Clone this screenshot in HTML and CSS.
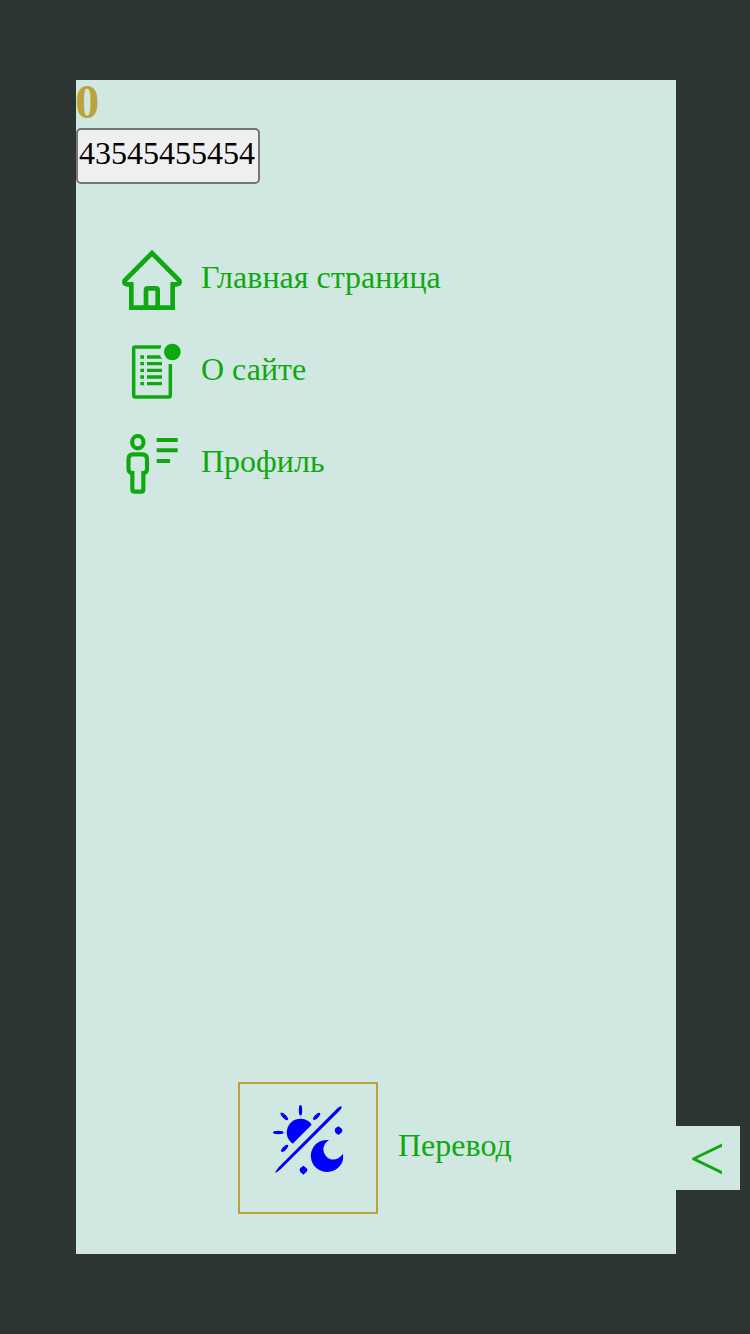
FILE: index.html
```html
<!DOCTYPE html>
<html lang="ru">
<head>
<meta charset="utf-8">
<title>Меню</title>
<link rel="stylesheet" href="styles.css">
</head>
<body>
<div class="page">
  <aside class="panel">
    <div class="score">0</div>
    <button class="code">43545455454</button>
    <nav class="menu">
      <a class="item">
        <svg class="icon" viewBox="30 30 180 180" fill="none" stroke="currentColor" stroke-width="14">
          <path d="M58 203V133H45Q33 130 39 121L120 39L201 121Q207 130 195 133H182V203Z"/>
          <path d="M102 203V150Q102 145 107 145H132Q137 145 137 150V203"/>
        </svg>
        <span>Главная страница</span>
      </a>
      <a class="item">
        <svg class="icon" viewBox="18 30 180 180" fill="none" stroke="currentColor" stroke-width="10.500">
          <path d="M133 45H57Q53 45 53 49V190Q53 195 57 195H159Q163 195 163 190V96"/>
          <path d="M73 75h11M73 95h11M73 115h11M73 135h11M73 155h11M93 75h39M93 95h45M93 115h45M93 135h45M93 155h45" stroke-width="10"/>
          <path d="M132 39l4 2-4 10zM132 70l2 5 5 5h-7z" fill="currentColor" stroke="none"/>
          <circle cx="169" cy="60" r="25" fill="currentColor" stroke="none"/>
        </svg>
        <span>О сайте</span>
      </a>
      <a class="item">
        <svg class="icon" viewBox="30 30 180 180" fill="none" stroke="currentColor" stroke-width="12.500">
          <ellipse cx="77.500" cy="54.500" rx="17" ry="18.500"/>
          <path d="M61 141V147H57Q49.500 143 49.500 135V106Q49.500 91 63 91H91Q105 91 105 106V135Q105 143 98 147H94V197Q94 203 88 203H68Q61 203 61 197V141"/>
          <path d="M134 48h63M134 79h63M134 111h40" stroke-width="12"/>
        </svg>
        <span>Профиль</span>
      </a>
    </nav>
    <div class="footer">
      <button class="theme" aria-label="Тема">
        <svg class="theme-icon" viewBox="0 0 270 270" fill="currentColor">
          <path d="M86 143L143 86A41 41 0 1 0 86 143Z"/>
          <path d="M33 231Q35 225 44 214L221 36Q230 29 232 31Q235 34 228 43L50 220Q39 229 33 231Z"/>
          <ellipse cx="109.500" cy="43" rx="5" ry="16"/>
          <ellipse cx="43" cy="109.500" rx="16" ry="5"/>
          <ellipse cx="61" cy="61" rx="15" ry="5.500" transform="rotate(45 61 61)"/>
          <ellipse cx="158" cy="61" rx="14" ry="5.500" transform="rotate(-45 158 61)"/>
          <ellipse cx="62" cy="157" rx="14" ry="5.500" transform="rotate(-45 62 157)"/>
          <path d="M195 132Q164 129 148 153Q132 181 149 208Q171 235 206 225Q242 209 237 173Q222 194 200 190Q178 181 178 158Q180 142 195 132Z"/>
          <path d="M223 91L232 97Q238 104 232 110L223 117L214 110Q209 104 214 97ZM118 209L127 216Q133 222 127 228L118 236L109 228Q104 222 109 216Z"/>
        </svg>
      </button>
      <span class="translate">Перевод</span>
    </div>
    <button class="toggle">&lt;</button>
  </aside>
</div>
</body>
</html>
```
FILE: styles.css
```css
* {
  box-sizing: border-box;
}
body {
  margin: 0;
  font-family: "Liberation Serif", serif;
  font-size: 32px;
  line-height: 36px;
  color: #10a810;
}
.page {
  height: 1334px;
  padding: 80px 74px 78px 76px;
  background: #2d3532;
  border-bottom: 2px solid #302f31;
}
.panel {
  position: relative;
  display: flex;
  flex-direction: column;
  align-items: flex-start;
  height: 1174px;
  background: #d1e8e2;
}
button {
  margin: 0;
  font-family: inherit;
}
.score {
  height: 48px;
  font-size: 48px;
  font-weight: bold;
  line-height: 44px;
  text-indent: -0.8px;
  color: #bba23a;
}
.code {
  width: 184px;
  height: 56px;
  padding: 0 0 6px 1px;
  border: 2px solid #767676;
  border-radius: 5px;
  background: #efefef;
  color: #000;
  font-size: 32px;
  line-height: 36px;
  text-align: left;
}
.menu {
  display: flex;
  flex-direction: column;
  gap: 32px;
  margin: 66px 0 0 46px;
}
.item {
  display: flex;
  gap: 19px;
  height: 60px;
}
.item span {
  padding-top: 9px;
}
.icon {
  width: 60px;
  height: 60px;
}
.footer {
  display: flex;
  align-items: center;
  gap: 20px;
  margin: auto 0 40px 162px;
}
.theme {
  display: flex;
  width: 140px;
  height: 132px;
  padding: 12px 24px;
  border: 2px solid #bba23a;
  background: none;
  color: #00f;
}
.theme-icon {
  width: 90px;
  height: 90px;
  flex: none;
}
.translate {
  padding-bottom: 6px;
}
/* Tab attached to the panel's outer edge */
.toggle {
  position: absolute;
  left: 100%;
  bottom: 64px;
  width: 64px;
  height: 64px;
  padding: 1px 2px 0 0;
  border: 0;
  background: #d1e8e2;
  color: #10a810;
  font-size: 64px;
  line-height: 64px;
}
```
